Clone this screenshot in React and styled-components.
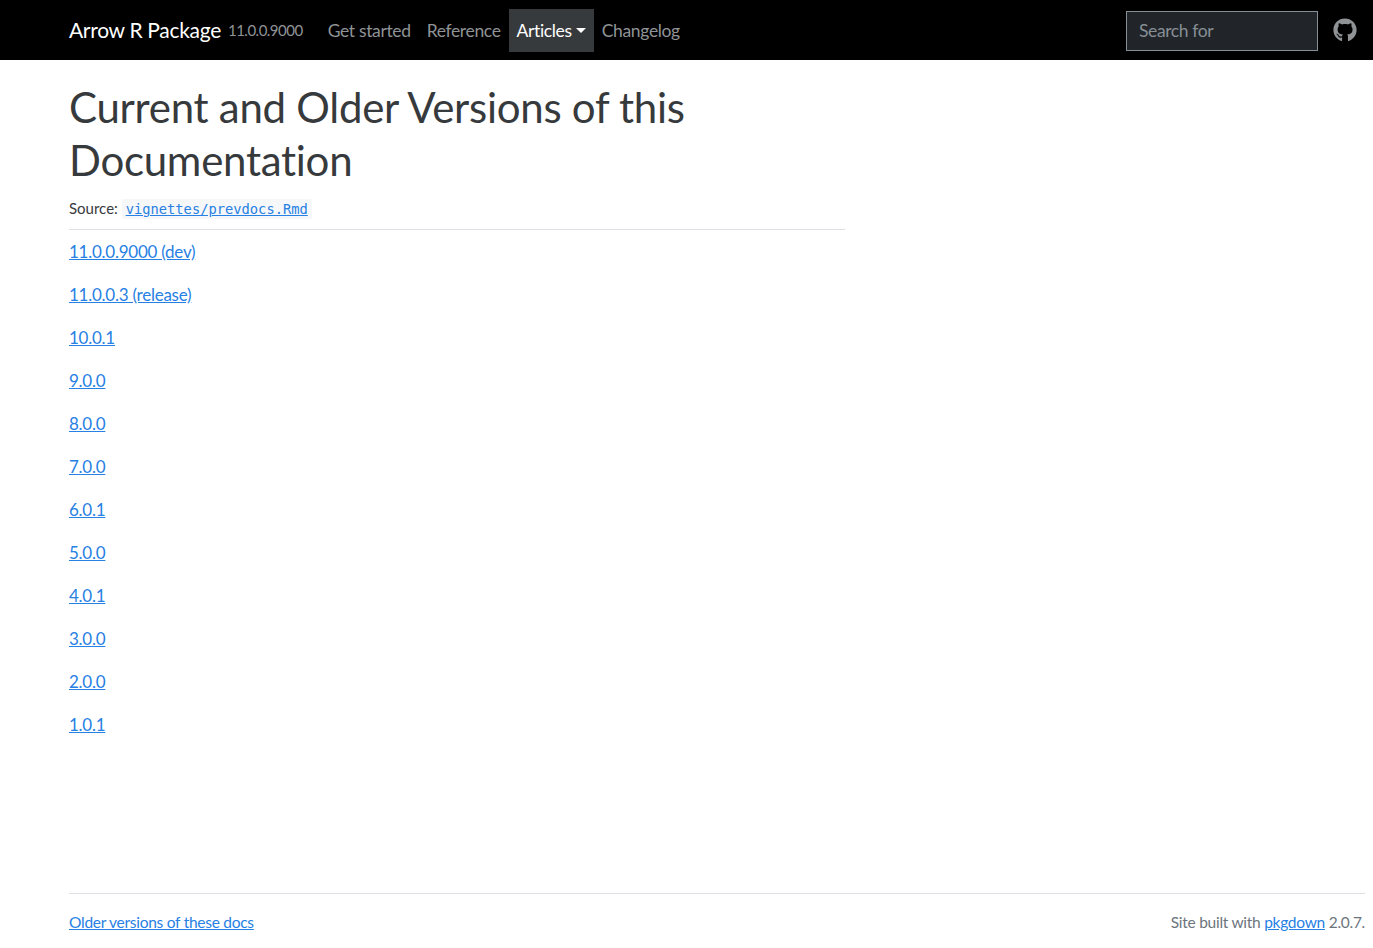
import React from 'react';
import styled, { createGlobalStyle } from 'styled-components';
import { FaGithub } from 'react-icons/fa';

const GlobalStyle = createGlobalStyle`
  html, body {
    margin: 0;
    padding: 0;
    background: #fff;
  }
  body {
    font-family: "Lato", "Liberation Sans", sans-serif;
    color: #373a3c;
  }
`;

const Page = styled.div`
  min-height: 100vh;
  display: flex;
  flex-direction: column;
  box-sizing: border-box;
`;

const Navbar = styled.nav`
  height: 60px;
  background: #000;
  display: flex;
  align-items: center;
  padding: 0 16px 0 69px;
  box-sizing: border-box;
`;

const Brand = styled.a`
  font-size: 21px;
  color: #fff;
  letter-spacing: -0.3px;
  margin-right: 7px;
  padding-bottom: 2px;
  white-space: nowrap;
  text-decoration: none;
`;

const Version = styled.small`
  font-size: 15px;
  color: #8f9396;
  letter-spacing: -0.5px;
  margin-right: 17px;
  white-space: nowrap;
`;

const NavItem = styled.a`
  display: flex;
  align-items: center;
  height: 43px;
  padding: 0 8px;
  font-size: 17.5px;
  letter-spacing: -0.35px;
  white-space: nowrap;
  text-decoration: none;
  color: ${(p) => (p.$active ? '#fff' : '#8f9396')};
  background: ${(p) => (p.$active ? '#373a3c' : 'transparent')};
`;

const Caret = styled.span`
  width: 0;
  height: 0;
  margin-left: 4px;
  border-top: 5px solid #fff;
  border-left: 5px solid transparent;
  border-right: 5px solid transparent;
`;

const Spacer = styled.div`
  flex: 1;
`;

const SearchInput = styled.input`
  width: 192px;
  height: 40px;
  margin-top: 1px;
  box-sizing: border-box;
  padding: 0 12px;
  background: #212529;
  border: 1px solid #868e96;
  color: #fff;
  font-family: inherit;
  font-size: 17.5px;
  letter-spacing: -0.4px;
  border-radius: 0;
  outline: none;
  &::placeholder {
    color: #868e96;
    opacity: 1;
  }
`;

const GithubLink = styled.a`
  display: flex;
  margin-left: 15px;
  font-size: 24px;
  color: #8f9396;
`;

const Main = styled.main`
  flex: 1;
  width: 776px;
  margin-left: 69px;
  padding-top: 21px;
`;

const Title = styled.h1`
  margin: 0;
  font-size: 42px;
  font-weight: 400;
  line-height: 53px;
  letter-spacing: -0.27px;
  color: #373a3c;
`;

const SourceLine = styled.div`
  display: flex;
  align-items: baseline;
  height: 24px;
  margin-top: 9px;
  padding-top: 3px;
  box-sizing: border-box;
  font-size: 15px;
`;

const Code = styled.code`
  padding: 0 4px;
  background: #f6f7f8;
  font-family: "DejaVu Sans Mono", "Liberation Mono", monospace;
  font-size: 13.75px;
  line-height: 20px;
  border-radius: 2px;
`;

const Link = styled.a`
  color: #2780e3;
  text-decoration: underline;
`;

const Rule = styled.hr`
  margin: 9px 0 8px;
  border: 0;
  border-top: 1px solid #dee2e6;
`;

const VersionRow = styled.p`
  margin: 0 0 16px;
  font-size: 17px;
  line-height: 27px;
  letter-spacing: -0.25px;
`;

const Footer = styled.footer`
  display: flex;
  justify-content: space-between;
  margin: 0 8px 0 69px;
  padding-top: 17px;
  height: 55px;
  box-sizing: border-box;
  border-top: 1px solid #dee2e6;
  font-size: 15.5px;
  line-height: 23px;
  letter-spacing: -0.27px;
  color: #6c757d;
`;

const versions = [
  '11.0.0.9000 (dev)',
  '11.0.0.3 (release)',
  '10.0.1',
  '9.0.0',
  '8.0.0',
  '7.0.0',
  '6.0.1',
  '5.0.0',
  '4.0.1',
  '3.0.0',
  '2.0.0',
  '1.0.1',
];

const App = () => {
  return (
    <Page>
      <GlobalStyle />
      <Navbar>
        <Brand href="#">Arrow R Package</Brand>
        <Version>11.0.0.9000</Version>
        <NavItem href="#">Get started</NavItem>
        <NavItem href="#">Reference</NavItem>
        <NavItem href="#" $active>Articles<Caret /></NavItem>
        <NavItem href="#">Changelog</NavItem>
        <Spacer />
        <SearchInput type="search" placeholder="Search for" />
        <GithubLink href="#"><FaGithub /></GithubLink>
      </Navbar>
      <Main>
        <Title>Current and Older Versions of this Documentation</Title>
        <SourceLine>
          Source:&nbsp;<Code><Link href="#">vignettes/prevdocs.Rmd</Link></Code>
        </SourceLine>
        <Rule />
        {versions.map((v) => (
          <VersionRow key={v}><Link href="#">{v}</Link></VersionRow>
        ))}
      </Main>
      <Footer>
        <div><Link href="#">Older versions of these docs</Link></div>
        <div>Site built with <Link href="#">pkgdown</Link> 2.0.7.</div>
      </Footer>
    </Page>
  );
};

export default App;
